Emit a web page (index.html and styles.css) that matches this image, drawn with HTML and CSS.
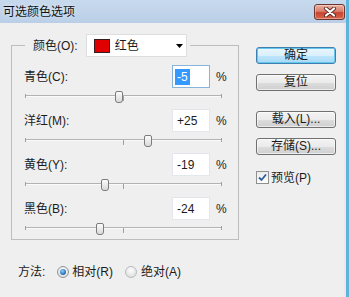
FILE: index.html
```html
<!DOCTYPE html>
<html lang="zh-CN">
<head>
<meta charset="utf-8">
<title>可选颜色选项</title>
<link rel="stylesheet" href="styles.css">
</head>
<body>
<div class="window">
  <div class="titlebar">
    <span class="title">可选颜色选项</span>
    <span class="close">
      <svg width="14" height="10" viewBox="0 0 14 10">
        <path d="M3 1.5 L11 8.5 M11 1.5 L3 8.5" stroke="#5a2a24" stroke-width="4" stroke-linecap="round" fill="none"/>
        <path d="M3 1.5 L11 8.5 M11 1.5 L3 8.5" stroke="#ffffff" stroke-width="2.2" stroke-linecap="round" fill="none"/>
      </svg>
    </span>
  </div>
  <div class="client">
    <div class="main">
      <fieldset class="group">
        <legend class="legend">
          <span class="legend-label">颜色(O):</span>
          <span class="select">
            <span class="swatch"></span>
            <span class="select-text">红色</span>
            <svg class="arrow" width="7" height="4" viewBox="0 0 7 4"><path d="M0 0 H7 L3.5 4 Z" fill="#000"/></svg>
          </span>
        </legend>

        <div class="adj">
          <div class="line">
            <span class="lbl">青色(C):</span>
            <span class="field focus"><span class="sel">-5</span></span>
            <span class="pct">%</span>
          </div>
          <div class="slider">
            <span class="track"></span>
            <span class="tick tick-l"></span><span class="tick tick-m"></span><span class="tick tick-r"></span>
            <span class="thumb" style="left: calc(47.5% - 4px)"></span>
          </div>
        </div>

        <div class="adj">
          <div class="line">
            <span class="lbl">洋红(M):</span>
            <span class="field">+25</span>
            <span class="pct">%</span>
          </div>
          <div class="slider">
            <span class="track"></span>
            <span class="tick tick-l"></span><span class="tick tick-m"></span><span class="tick tick-r"></span>
            <span class="thumb" style="left: calc(62.5% - 4px)"></span>
          </div>
        </div>

        <div class="adj">
          <div class="line">
            <span class="lbl">黄色(Y):</span>
            <span class="field">-19</span>
            <span class="pct">%</span>
          </div>
          <div class="slider">
            <span class="track"></span>
            <span class="tick tick-l"></span><span class="tick tick-m"></span><span class="tick tick-r"></span>
            <span class="thumb" style="left: calc(40.5% - 4px)"></span>
          </div>
        </div>

        <div class="adj last">
          <div class="line">
            <span class="lbl">黑色(B):</span>
            <span class="field">-24</span>
            <span class="pct">%</span>
          </div>
          <div class="slider">
            <span class="track"></span>
            <span class="tick tick-l"></span><span class="tick tick-m"></span><span class="tick tick-r"></span>
            <span class="thumb" style="left: calc(38% - 4px)"></span>
          </div>
        </div>
      </fieldset>

      <div class="method">
        <span class="method-label">方法:</span>
        <span class="radio on"></span><span class="radio-text">相对(R)</span>
        <span class="radio off"></span><span class="radio-text">绝对(A)</span>
      </div>
    </div>

    <div class="side">
      <div class="btn default">确定</div>
      <div class="btn">复位</div>
      <div class="btn gap">载入(L)...</div>
      <div class="btn">存储(S)...</div>
      <div class="check-row">
        <span class="checkbox">
          <svg width="11" height="11" viewBox="0 0 11 11"><path d="M2 5.5 L4.5 8 L9 2.5" stroke="#2c5c9e" stroke-width="1.8" fill="none"/></svg>
        </span>
        <span class="check-text">预览(P)</span>
      </div>
    </div>
  </div>
</div>
</body>
</html>
```

FILE: styles.css
```css
* { box-sizing: border-box; }
html, body { margin: 0; padding: 0; }
body {
  width: 349px;
  height: 297px;
  overflow: hidden;
  background: #efefef;
  font: 12px/16px "Liberation Sans", "Noto Sans CJK SC", sans-serif;
  color: #1b1b1b;
}
.window {
  width: 349px;
  height: 297px;
  display: flex;
  flex-direction: column;
  border-right: 3px solid #5ab6dc;
  background: #efefef;
}
.titlebar {
  height: 23px;
  flex: none;
  display: flex;
  align-items: center;
  justify-content: space-between;
  padding-left: 3px;
  background: linear-gradient(#c7d9ed, #bacfe7);
}
.title {
  font-size: 12px;
  color: #111;
  text-shadow: 0 0 4px rgba(255,255,255,0.8);
}
.close {
  width: 31px;
  height: 16px;
  margin-right: 1px;
  border: 1px solid #6b3530;
  border-radius: 3px;
  background: linear-gradient(#eab0a2 0%, #d9806c 45%, #c8432f 55%, #d8664c 100%);
  display: flex;
  align-items: center;
  justify-content: center;
  box-shadow: inset 0 0 0 1px rgba(255,255,255,0.35);
}
.client {
  flex: 1;
  display: flex;
  box-shadow: inset -2px 0 0 #f4e3ea;
}
.main { width: 239px; flex: none; }
.group {
  margin: 11px 0 0 11px;
  width: 228px;
  min-width: 0;
  padding: 0 12px 0 12px;
  border: 1px solid #bdbdbd;
}
.legend {
  margin-left: 1px;
  padding: 0 3px 0 8px;
  height: 23px;
  display: flex;
  align-items: center;
}
.legend-label { margin-right: 8px; }
.select {
  width: 101px;
  height: 23px;
  border: 1px solid #dedede;
  background: #fff;
  display: flex;
  align-items: center;
  padding-left: 7px;
}
.swatch {
  width: 16px;
  height: 14px;
  background: #e10000;
  border: 1px solid #3a1a1a;
}
.select-text { margin-left: 5px; }
.arrow { margin-left: auto; margin-right: 3px; }
.adj:first-of-type { margin-top: 8px; }
.line {
  height: 23px;
  display: flex;
  align-items: center;
}
.lbl { flex: 1; }
.field {
  width: 38px;
  height: 23px;
  border: 1px solid #e3e7eb;
  background: #fff;
  padding-left: 4px;
  display: flex;
  align-items: center;
}
.field.focus { border-color: #88b3dc; padding-left: 2px; }
.sel { background: #3399ff; color: #fff; padding: 0 2px; line-height: 16px; }
.pct { width: 16px; padding-left: 6px; }
.slider {
  position: relative;
  height: 21px;
  margin-left: 1px;
  width: 197px;
}
.adj.last .slider { height: 19px; }
.track {
  position: absolute;
  left: 0; right: 0;
  top: 7px;
  height: 2px;
  border-top: 1px solid #b3b3b3;
  border-bottom: 1px solid #fafafa;
}
.tick {
  position: absolute;
  width: 1px;
  background: #a0a0a0;
}
.tick-l { left: 0; top: 6px; height: 4px; }
.tick-r { right: 0; top: 6px; height: 4px; }
.tick-m { left: 98px; top: 8px; height: 5px; }
.thumb {
  position: absolute;
  top: 3px;
  width: 8px;
  height: 12px;
  border: 1px solid #7c7c7c;
  border-radius: 2px 2px 3px 3px;
  background: linear-gradient(#fbfbfb, #d9d9d9);
}
.method {
  margin: 24px 0 0 18px;
  height: 16px;
  display: flex;
  align-items: center;
}
.method-label { margin-right: 12px; }
.radio {
  width: 12px;
  height: 12px;
  border-radius: 50%;
  border: 1px solid #8f9499;
  background: radial-gradient(circle at 50% 35%, #ffffff, #d6d6d6);
  display: flex;
  align-items: center;
  justify-content: center;
  margin-right: 3px;
}
.radio.on::after {
  content: "";
  width: 6px;
  height: 6px;
  border-radius: 50%;
  background: radial-gradient(circle at 40% 35%, #8fd0f7, #1f67b4 70%);
}
.radio.off { margin-left: 12px; border-color: #b8bcc0; margin-right: 4px; }
.side {
  margin-left: 17px;
  padding-top: 24px;
  display: flex;
  flex-direction: column;
}
.btn {
  width: 80px;
  height: 17px;
  margin-bottom: 10px;
  border: 1px solid #707070;
  border-radius: 3px;
  background: linear-gradient(#f3f3f3 0%, #ebebeb 50%, #dddddd 51%, #cfcfcf 100%);
  box-shadow: inset 0 0 0 1px rgba(255,255,255,0.6);
  text-align: center;
  line-height: 14px;
}
.btn.default {
  border-color: #3c7fb1;
  background: linear-gradient(#eaf6fd 0%, #d9f0fc 50%, #bee6fd 51%, #a7d9f5 100%);
  box-shadow: inset 0 0 0 1px #68c6ec;
}
.btn.gap { margin-top: 10px; }
.check-row {
  margin-top: 6px;
  display: flex;
  align-items: center;
  height: 13px;
}
.checkbox {
  width: 13px;
  height: 13px;
  border: 1px solid #8e8f8f;
  background: linear-gradient(#ececec, #fdfdfd);
  display: flex;
  align-items: center;
  justify-content: center;
}
.check-text { margin-left: 2px; }
```
